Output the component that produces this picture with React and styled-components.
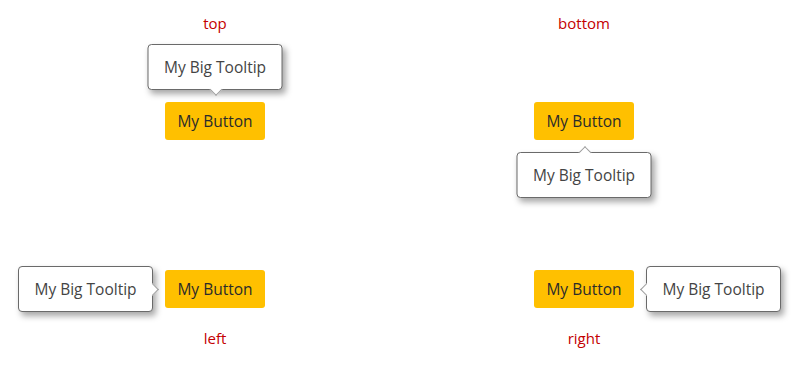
import React from 'react';
import styled, { createGlobalStyle, css } from 'styled-components';

const Global = createGlobalStyle`
  body {
    margin: 0;
    background: #fff;
    font-family: 'Segoe UI', 'Open Sans', 'Noto Sans', sans-serif;
  }
`;

const cells = [
  { place: 'top', labelFirst: true },
  { place: 'bottom', labelFirst: true },
  { place: 'left', labelFirst: false },
  { place: 'right', labelFirst: false },
];

export default function App() {
  return (
    <>
      <Global />
      <Grid>
        {cells.map(({ place, labelFirst }) => (
          <Cell key={place} $labelFirst={labelFirst}>
            {labelFirst && <Label>{place}</Label>}
            <Anchor>
              <Button>My Button</Button>
              <Tip $place={place}>
                My Big Tooltip
                <Arrow $place={place} />
              </Tip>
            </Anchor>
            {!labelFirst && <Label $below>{place}</Label>}
          </Cell>
        ))}
      </Grid>
    </>
  );
}

const Grid = styled.div`
  display: grid;
  grid-template-columns: 370px 368px;
  grid-template-rows: 140px 230px;
  padding-left: 30px;
`;

const Cell = styled.div`
  display: flex;
  flex-direction: column;
  align-items: center;
  justify-content: ${(p) => (p.$labelFirst ? 'space-between' : 'flex-start')};
  padding-top: ${(p) => (p.$labelFirst ? '13px' : '130px')};
`;

const Label = styled.div`
  color: #c40000;
  font-size: 15px;
  line-height: 20px;
  margin-top: ${(p) => (p.$below ? '20px' : '0')};
`;

const Anchor = styled.div`
  position: relative;
`;

const Button = styled.button`
  display: block;
  width: 100px;
  height: 38px;
  border: none;
  border-radius: 3px;
  background: #ffc000;
  color: #2b2b2b;
  font: inherit;
  font-size: 15.5px;
  padding: 0;
`;

const placeTip = {
  top: css`
    bottom: calc(100% + 12px);
    left: 50%;
    transform: translateX(-50%);
  `,
  bottom: css`
    top: calc(100% + 12px);
    left: 50%;
    transform: translateX(-50%);
  `,
  left: css`
    right: calc(100% + 12px);
    top: 50%;
    transform: translateY(-50%);
  `,
  right: css`
    left: calc(100% + 12px);
    top: 50%;
    transform: translateY(-50%);
  `,
};

const Tip = styled.div`
  position: absolute;
  ${(p) => placeTip[p.$place]}
  box-sizing: border-box;
  width: 135px;
  height: 46px;
  display: flex;
  align-items: center;
  justify-content: center;
  background: #fff;
  border: 1px solid #6a6a6a;
  border-radius: 4px;
  box-shadow: 3px 4px 6px rgba(0, 0, 0, 0.35);
  color: #444;
  font-size: 15.5px;
  white-space: nowrap;
`;

const placeArrow = {
  top: css`
    bottom: -5px;
    left: calc(50% - 4px);
    border-right: 1px solid #9a9a9a;
    border-bottom: 1px solid #9a9a9a;
  `,
  bottom: css`
    top: -5px;
    left: calc(50% - 4px);
    border-left: 1px solid #9a9a9a;
    border-top: 1px solid #9a9a9a;
  `,
  left: css`
    right: -5px;
    top: calc(50% - 4px);
    border-right: 1px solid #9a9a9a;
    border-top: 1px solid #9a9a9a;
  `,
  right: css`
    left: -5px;
    top: calc(50% - 4px);
    border-left: 1px solid #9a9a9a;
    border-bottom: 1px solid #9a9a9a;
  `,
};

const Arrow = styled.span`
  position: absolute;
  width: 8px;
  height: 8px;
  background: #fff;
  transform: rotate(45deg);
  ${(p) => placeArrow[p.$place]}
`;
